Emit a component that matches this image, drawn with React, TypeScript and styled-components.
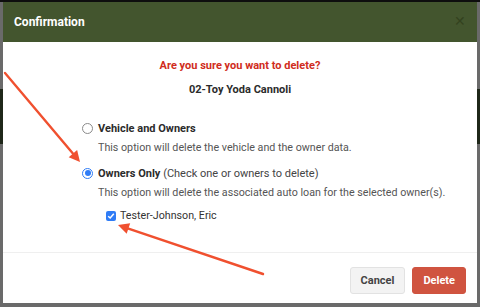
import styled, { createGlobalStyle } from "styled-components";

const GlobalStyle = createGlobalStyle`
  html, body {
    margin: 0;
    padding: 0;
    width: 480px;
    height: 307px;
    overflow: hidden;
    font-family: Roboto, "Liberation Sans", sans-serif;
  }
`;

export const Backdrop = styled.div`
  position: relative;
  width: 480px;
  height: 307px;
  box-sizing: border-box;
  padding: 2px 3px 4px 3px;
  background: linear-gradient(
    to bottom,
    #0e0e0e 0,
    #0e0e0e 2px,
    #6a6a6a 2px,
    #6a6a6a 89px,
    #1f2719 89px,
    #1f2719 144px,
    #6a6a6a 144px
  );
`;

export const Modal = styled.div`
  height: 100%;
  display: flex;
  flex-direction: column;
  background: #ffffff;
`;

export const Header = styled.div`
  height: 40px;
  flex-shrink: 0;
  display: flex;
  align-items: center;
  justify-content: space-between;
  padding: 0 11px;
  box-sizing: border-box;
  background: #43552e;
`;

export const Title = styled.span`
  color: #ffffff;
  font-size: 12px;
  font-weight: 700;
`;

export const Close = styled.span`
  color: #33421f;
  font-size: 14px;
  line-height: 1;
  margin-top: -3px;
`;

export const Body = styled.div`
  flex: 1;
  display: flex;
  flex-direction: column;
  padding-top: 17px;
  border-bottom: 1px solid #efefef;
`;

export const Centered = styled.div<{ color: string }>`
  text-align: center;
  font-size: 11px;
  font-weight: 700;
  color: ${({ color }) => color};
  line-height: 14px;
`;

export const Question = styled(Centered)`
  margin-bottom: 10px;
`;

export const Options = styled.div`
  display: flex;
  flex-direction: column;
  padding: 24px 0 0 79px;
  font-size: 10.7px;
  color: #333333;
`;

export const OptionRow = styled.label`
  display: flex;
  align-items: center;
  gap: 5px;
  height: 14px;
`;

export const Radio = styled.span<{ checked: boolean }>`
  width: 11px;
  height: 11px;
  box-sizing: border-box;
  border-radius: 50%;
  border: 1px solid ${({ checked }) => (checked ? "#2f7cf6" : "#8a8a8a")};
  background: #ffffff;
  display: flex;
  align-items: center;
  justify-content: center;
  &::after {
    content: "";
    width: 6px;
    height: 6px;
    border-radius: 50%;
    background: ${({ checked }) => (checked ? "#2f7cf6" : "transparent")};
  }
`;

export const OptionLabel = styled.span`
  font-weight: 700;
  color: #2b2b2b;
  font-size: 11px;
`;

export const Hint = styled.span`
  font-weight: 400;
  color: #444;
`;

export const Description = styled.div<{ bottom: number }>`
  padding-left: 16px;
  margin-top: 6px;
  margin-bottom: ${({ bottom }) => bottom}px;
  line-height: 14px;
  color: #555555;
`;

export const OwnerRow = styled.label`
  display: flex;
  align-items: center;
  gap: 4px;
  padding-left: 24px;
  margin-top: 9px;
  color: #333333;
`;

export const Checkbox = styled.span`
  width: 10px;
  height: 10px;
  border-radius: 2px;
  background: #2f7cf6;
  display: flex;
  align-items: center;
  justify-content: center;
`;

export const Footer = styled.div`
  height: 50px;
  flex-shrink: 0;
  display: flex;
  justify-content: flex-end;
  align-items: flex-start;
  gap: 7px;
  padding: 14px 11px 0 0;
  box-sizing: border-box;
`;

export const Button = styled.button<{ primary?: boolean }>`
  height: 27px;
  padding: 0 10px;
  border-radius: 3px;
  font-family: Roboto, "Liberation Sans", sans-serif;
  font-size: 11px;
  font-weight: 700;
  border: 1px solid ${({ primary }) => (primary ? "#cf5340" : "#e2e2e2")};
  background: ${({ primary }) => (primary ? "#d05440" : "#f3f3f3")};
  color: ${({ primary }) => (primary ? "#ffffff" : "#444444")};
`;

export const Annotations = styled.svg`
  position: absolute;
  left: 0;
  top: 0;
  pointer-events: none;
`;

const Arrow = ({ x1, y1, x2, y2 }: { x1: number; y1: number; x2: number; y2: number }) => {
  const a = Math.atan2(y2 - y1, x2 - x1);
  const len = 11;
  const w = 5.5;
  const bx = x2 - Math.cos(a) * len;
  const by = y2 - Math.sin(a) * len;
  const px = -Math.sin(a) * w;
  const py = Math.cos(a) * w;
  return (
    <g>
      <line x1={x1} y1={y1} x2={bx} y2={by} stroke="#f0502f" strokeWidth={2.4} strokeLinecap="round" />
      <polygon points={`${x2},${y2} ${bx + px},${by + py} ${bx - px},${by - py}`} fill="#f0502f" />
    </g>
  );
};

export default function App() {
  return (
    <>
      <GlobalStyle />
      <Backdrop>
        <Modal>
          <Header>
            <Title>Confirmation</Title>
            <Close>✕</Close>
          </Header>
          <Body>
            <Question color="#d02c20">Are you sure you want to delete?</Question>
            <Centered color="#2b2b2b">02-Toy Yoda Cannoli</Centered>
            <Options>
              <OptionRow>
                <Radio checked={false} />
                <OptionLabel>Vehicle and Owners</OptionLabel>
              </OptionRow>
              <Description bottom={11}>This option will delete the vehicle and the owner data.</Description>
              <OptionRow>
                <Radio checked />
                <OptionLabel>
                  Owners Only <Hint>(Check one or owners to delete)</Hint>
                </OptionLabel>
              </OptionRow>
              <Description bottom={0}>
                This option will delete the associated auto loan for the selected owner(s).
              </Description>
              <OwnerRow>
                <Checkbox>
                  <svg width="8" height="8" viewBox="0 0 8 8">
                    <path d="M1.2 4.2 L3.2 6 L6.8 1.8" fill="none" stroke="#fff" strokeWidth="1.5" />
                  </svg>
                </Checkbox>
                Tester-Johnson, Eric
              </OwnerRow>
            </Options>
          </Body>
          <Footer>
            <Button>Cancel</Button>
            <Button primary>Delete</Button>
          </Footer>
        </Modal>
        <Annotations width="480" height="307">
          <Arrow x1={5} y1={73} x2={80} y2={162} />
          <Arrow x1={263} y1={274} x2={118} y2={225} />
        </Annotations>
      </Backdrop>
    </>
  );
}
